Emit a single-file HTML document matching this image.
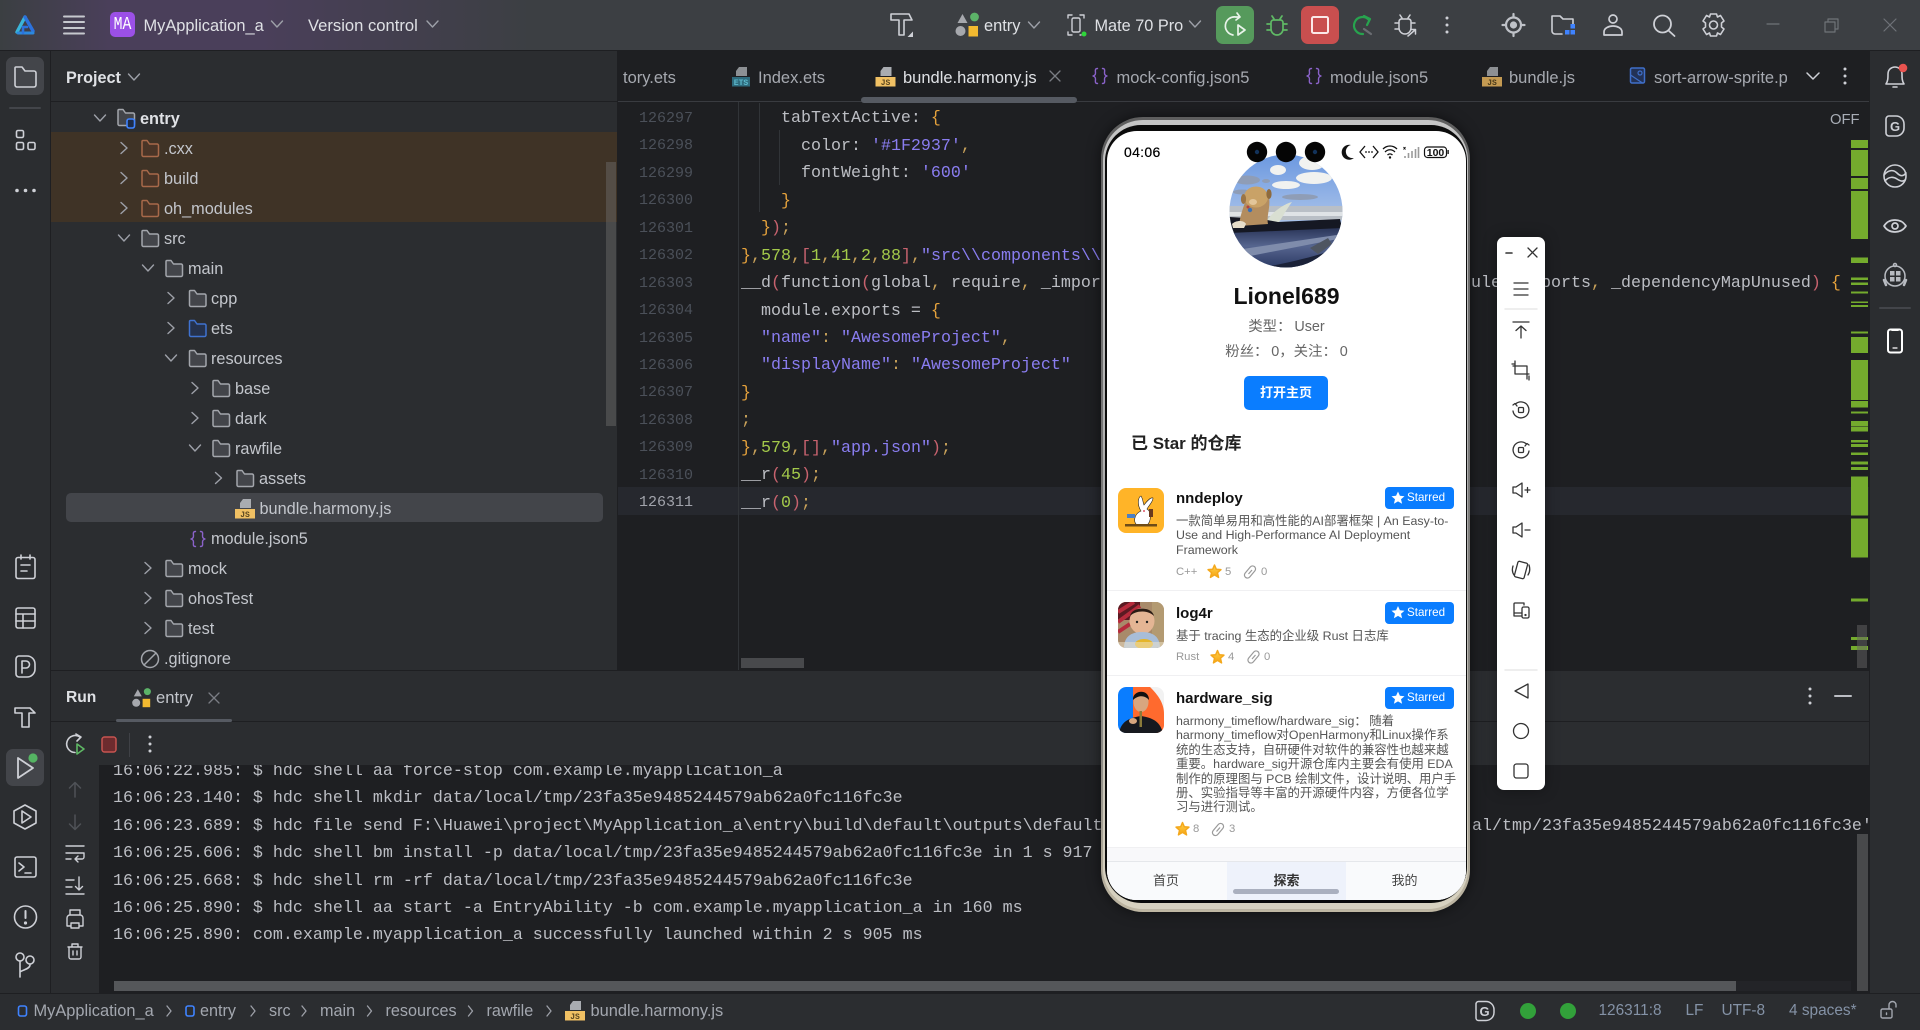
<!DOCTYPE html>
<html><head><meta charset="utf-8"><style>
html,body{margin:0;padding:0;width:1920px;height:1030px;overflow:hidden;background:#1e1f22}
body{position:relative;font-family:"Liberation Sans","Noto Sans CJK SC",sans-serif;color:#bcbec4}
.b{position:absolute}
.t{position:absolute;height:20px;line-height:20px;margin-top:-10px;white-space:nowrap}
.u{font-size:16.3px;color:#c3c6cc}
.tab{font-size:16.5px;color:#a6a9b0;margin-top:-9px}
.m{font-family:"Liberation Mono",monospace;font-size:16.67px;color:#bcbec4;white-space:pre;margin-top:-8px}
.ln{font-family:"Liberation Mono",monospace;font-size:15px;color:#4b5059;width:60px;left:633px;text-align:right;margin-top:-8.5px}
.st{font-size:16.2px;color:#a3a7af}
.str{font-size:15.4px;color:#8492a6}
.s{color:#8a7df0}.n{color:#a3c94a}.o{color:#e6a23c}.p{color:#c7626e}.c{color:#c9a25a}
svg.l{position:absolute;left:0;top:0;overflow:visible}
.ph{font-size:12.4px;color:#555;line-height:14.4px;position:absolute;left:1176px;white-space:nowrap}
.nm{font-size:15px;font-weight:bold;color:#111;margin-top:-9px}
.mt{font-size:11.3px;color:#999}
.badge{position:absolute;left:1385px;width:69px;height:22px;background:#0a7dff;border-radius:4px;color:#fff;font-size:11.6px;line-height:22px;text-indent:22px}
.sep{position:absolute;left:1107px;width:359px;height:1px;background:#f0f0f2}
</style></head><body>

<!-- backgrounds -->
<div class="b" style="left:0;top:0;width:1920px;height:50px;background:linear-gradient(90deg,#3b3f42 0,#4a3f5a 110px,#4a3f5a 260px,#3c3f43 530px)"></div>
<div class="b" style="left:0;top:50px;width:1920px;height:1px;background:#1e1f22"></div>
<div class="b" style="left:0;top:51px;width:50px;height:942px;background:#2b2d30"></div>
<div class="b" style="left:50px;top:51px;width:1px;height:942px;background:#1e1f22"></div>
<div class="b" style="left:51px;top:51px;width:566px;height:619px;background:#2b2d30"></div>
<div class="b" style="left:51px;top:101px;width:566px;height:1px;background:#1e1f22"></div>
<div class="b" style="left:51px;top:132px;width:566px;height:90px;background:#3f3326"></div>
<div class="b" style="left:66px;top:493px;width:537px;height:29px;border-radius:5px;background:#43454a"></div>
<div class="b" style="left:606px;top:162px;width:10px;height:264px;background:rgba(115,115,115,.42)"></div>
<div class="b" style="left:617px;top:51px;width:1px;height:619px;background:#1e1f22"></div>
<div class="b" style="left:618px;top:101px;width:1252px;height:1px;background:#393b40"></div>
<div class="b" style="left:861px;top:97px;width:216px;height:6px;border-radius:3px;background:#565a62"></div>
<div class="b" style="left:618px;top:487px;width:1252px;height:28px;background:#26282e"></div>
<div class="b" style="left:738px;top:102px;width:1px;height:568px;background:#313438"></div>
<div class="b" style="left:759px;top:103px;width:1px;height:109px;background:#313438"></div>
<div class="b" style="left:779px;top:130px;width:1px;height:55px;background:#313438"></div>
<div class="b" style="left:741px;top:658px;width:63px;height:10px;background:#48494c"></div>
<div class="b" style="left:1870px;top:51px;width:50px;height:942px;background:#2b2d30"></div>
<div class="b" style="left:1869px;top:51px;width:1px;height:942px;background:#1e1f22"></div>
<div class="b" style="left:51px;top:670px;width:1818px;height:95px;background:#2b2d30"></div>
<div class="b" style="left:51px;top:670px;width:1818px;height:1px;background:#1e1f22"></div>
<div class="b" style="left:51px;top:721px;width:1818px;height:1px;background:#1e1f22"></div>
<div class="b" style="left:116px;top:719px;width:116px;height:3px;background:#565a62;border-radius:2px"></div>
<div class="b" style="left:51px;top:765px;width:48px;height:228px;background:#2b2d30"></div>
<div class="b" style="left:114px;top:981px;width:1622px;height:10px;background:#55575a"></div>
<div class="b" style="left:1736px;top:981px;width:115px;height:10px;background:#232428"></div>
<div class="b" style="left:1857px;top:834px;width:11px;height:157px;background:#48494b"></div>
<div class="b" style="left:0;top:993px;width:1920px;height:37px;background:#2b2d30;border-top:1px solid #1e1f22;box-sizing:border-box"></div>
<div class="b" style="left:129px;top:733px;width:1px;height:24px;background:#3f4146"></div>

<!-- top bar text -->
<div class="b" style="left:110px;top:12px;width:25px;height:25px;border-radius:5px;background:#9b50e6"></div>
<div class="b" style="left:110px;top:13px;width:25px;height:25px;color:#fff;font:18px/25px 'Liberation Mono',monospace;text-align:center;transform:scaleX(.82)">MA</div>
<div class="t" style="left:143.5px;top:26px;font-size:16.4px;color:#dfe1e5">MyApplication_a</div>
<div class="t" style="left:308px;top:26px;font-size:16.6px;color:#dfe1e5">Version control</div>
<div class="t" style="left:984px;top:26px;font-size:16.4px;color:#dfe1e5">entry</div>
<div class="t" style="left:1094.5px;top:26px;font-size:16.3px;color:#dfe1e5">Mate 70 Pro</div>
<div class="b" style="left:1216px;top:6px;width:38px;height:38px;border-radius:7px;background:#569a5c"></div>
<div class="b" style="left:1301px;top:6px;width:38px;height:38px;border-radius:7px;background:#c94f4f"></div>

<!-- project -->
<div class="t" style="left:66px;top:78px;font-size:16.2px;font-weight:bold;color:#dfe1e5">Project</div>
<div class="t u" style="left:140px;top:119px;font-weight:bold;color:#dfe1e5">entry</div>
<div class="t u" style="left:164px;top:149px">.cxx</div>
<div class="t u" style="left:164px;top:179px">build</div>
<div class="t u" style="left:164px;top:209px">oh_modules</div>
<div class="t u" style="left:164px;top:239px">src</div>
<div class="t u" style="left:188px;top:269px">main</div>
<div class="t u" style="left:211px;top:299px">cpp</div>
<div class="t u" style="left:211px;top:329px">ets</div>
<div class="t u" style="left:211px;top:359px">resources</div>
<div class="t u" style="left:235px;top:389px">base</div>
<div class="t u" style="left:235px;top:419px">dark</div>
<div class="t u" style="left:235px;top:449px">rawfile</div>
<div class="t u" style="left:259px;top:479px">assets</div>
<div class="t u" style="left:259.5px;top:509px">bundle.harmony.js</div>
<div class="t u" style="left:211px;top:539px">module.json5</div>
<div class="t u" style="left:188px;top:569px">mock</div>
<div class="t u" style="left:188px;top:599px">ohosTest</div>
<div class="t u" style="left:188px;top:629px">test</div>
<div class="t u" style="left:164px;top:659px">.gitignore</div>

<!-- tabs -->
<div class="t tab" style="left:623px;top:77px">tory.ets</div>
<div class="t tab" style="left:758px;top:77px">Index.ets</div>
<div class="t tab" style="left:903px;top:77px;color:#dfe1e5">bundle.harmony.js</div>
<div class="t tab" style="left:1116.5px;top:77px">mock-config.json5</div>
<div class="t tab" style="left:1330px;top:77px">module.json5</div>
<div class="t tab" style="left:1509px;top:77px">bundle.js</div>
<div class="t tab" style="left:1654px;top:77px;width:133px;overflow:hidden">sort-arrow-sprite.png</div>
<div class="t" style="left:1830px;top:120px;font-size:14.8px;color:#a8adb6">OFF</div>

<!-- line numbers -->
<div class="t ln" style="top:117.3px">126297</div>
<div class="t ln" style="top:144.8px">126298</div>
<div class="t ln" style="top:172.2px">126299</div>
<div class="t ln" style="top:199.6px">126300</div>
<div class="t ln" style="top:227.1px">126301</div>
<div class="t ln" style="top:254.5px">126302</div>
<div class="t ln" style="top:282px">126303</div>
<div class="t ln" style="top:309.5px">126304</div>
<div class="t ln" style="top:337px">126305</div>
<div class="t ln" style="top:364.4px">126306</div>
<div class="t ln" style="top:391.8px">126307</div>
<div class="t ln" style="top:419.3px">126308</div>
<div class="t ln" style="top:446.7px">126309</div>
<div class="t ln" style="top:474.2px">126310</div>
<div class="t ln" style="top:501.7px;color:#a1a3ab">126311</div>

<!-- code -->
<div class="t m" style="left:741px;top:117.3px">    tabTextActive: <span class="o">{</span></div>
<div class="t m" style="left:741px;top:144.8px">      color: <span class="s">'#1F2937'</span><span class="c">,</span></div>
<div class="t m" style="left:741px;top:172.2px">      fontWeight: <span class="s">'600'</span></div>
<div class="t m" style="left:741px;top:199.6px">    <span class="o">}</span></div>
<div class="t m" style="left:741px;top:227.1px">  <span class="o">}</span><span class="p">)</span><span class="c">;</span></div>
<div class="t m" style="left:741px;top:254.5px"><span class="o">}</span><span class="c">,</span><span class="n">578</span><span class="c">,</span><span class="p">[</span><span class="n">1</span><span class="c">,</span><span class="n">41</span><span class="c">,</span><span class="n">2</span><span class="c">,</span><span class="n">88</span><span class="p">]</span><span class="c">,</span><span class="s">"src\\components\\</span></div>
<div class="t m" style="left:741px;top:282px">__d<span class="p">(</span>function<span class="p">(</span>global<span class="c">,</span> require<span class="c">,</span> _impor</div>
<div class="t m" style="left:1471px;top:282px">ule<span class="c">,</span> exports<span class="c">,</span> _dependencyMapUnused<span class="p">)</span> <span class="o">{</span></div>
<div class="t m" style="left:741px;top:309.5px">  module.exports = <span class="o">{</span></div>
<div class="t m" style="left:741px;top:337px">  <span class="s">"name"</span><span class="c">:</span> <span class="s">"AwesomeProject"</span><span class="c">,</span></div>
<div class="t m" style="left:741px;top:364.4px">  <span class="s">"displayName"</span><span class="c">:</span> <span class="s">"AwesomeProject"</span></div>
<div class="t m" style="left:741px;top:391.8px"><span class="o">}</span></div>
<div class="t m" style="left:741px;top:419.3px"><span class="c">;</span></div>
<div class="t m" style="left:741px;top:446.7px"><span class="o">}</span><span class="c">,</span><span class="n">579</span><span class="c">,</span><span class="p">[]</span><span class="c">,</span><span class="s">"app.json"</span><span class="p">)</span><span class="c">;</span></div>
<div class="t m" style="left:741px;top:474.2px">__r<span class="p">(</span><span class="n">45</span><span class="p">)</span><span class="c">;</span></div>
<div class="t m" style="left:741px;top:501.7px">__r<span class="p">(</span><span class="n">0</span><span class="p">)</span><span class="c">;</span></div>

<!-- run panel -->
<div class="t" style="left:66px;top:698px;font-size:15.6px;font-weight:bold;color:#dfe1e5">Run</div>
<div class="t" style="left:156px;top:698px;font-size:16.6px;color:#c3c6cc">entry</div>
<div class="b" style="left:99px;top:765px;width:1771px;height:215px;overflow:hidden">
<div class="t m" style="left:14px;top:5px">16:06:22.985: $ hdc shell aa force-stop com.example.myapplication_a</div>
<div class="t m" style="left:14px;top:32.4px">16:06:23.140: $ hdc shell mkdir data/local/tmp/23fa35e9485244579ab62a0fc116fc3e</div>
<div class="t m" style="left:14px;top:59.8px">16:06:23.689: $ hdc file send F:\Huawei\project\MyApplication_a\entry\build\default\outputs\default</div>
<div class="t m" style="left:1373px;top:59.8px">al/tmp/23fa35e9485244579ab62a0fc116fc3e'</div>
<div class="t m" style="left:14px;top:87.2px">16:06:25.606: $ hdc shell bm install -p data/local/tmp/23fa35e9485244579ab62a0fc116fc3e in 1 s 917 ms</div>
<div class="t m" style="left:14px;top:114.6px">16:06:25.668: $ hdc shell rm -rf data/local/tmp/23fa35e9485244579ab62a0fc116fc3e</div>
<div class="t m" style="left:14px;top:142px">16:06:25.890: $ hdc shell aa start -a EntryAbility -b com.example.myapplication_a in 160 ms</div>
<div class="t m" style="left:14px;top:169.4px">16:06:25.890: com.example.myapplication_a successfully launched within 2 s 905 ms</div>
</div>

<!-- status bar -->
<div class="t st" style="left:33.5px;top:1011px;font-size:16.4px">MyApplication_a</div>
<div class="t st" style="left:200px;top:1011px">entry</div>
<div class="t st" style="left:269px;top:1011px">src</div>
<div class="t st" style="left:320px;top:1011px">main</div>
<div class="t st" style="left:385.5px;top:1011px">resources</div>
<div class="t st" style="left:486.5px;top:1011px">rawfile</div>
<div class="t st" style="left:590.5px;top:1011px;font-size:16.4px">bundle.harmony.js</div>
<div class="t str" style="left:1598.5px;top:1011px">126311:8</div>
<div class="t str" style="left:1685.5px;top:1011px">LF</div>
<div class="t str" style="left:1721.5px;top:1011px">UTF-8</div>
<div class="t str" style="left:1789px;top:1011px">4 spaces*</div>
<div class="b" style="left:1520px;top:1003px;width:16px;height:16px;border-radius:50%;background:#32a13a"></div>
<div class="b" style="left:1560px;top:1003px;width:16px;height:16px;border-radius:50%;background:#32a13a"></div>

<!-- icons under phone -->
<svg class="l" width="1920" height="1030" viewBox="0 0 1920 1030" fill="none" stroke-linecap="round" stroke-linejoin="round">
<defs>
<g id="cr"><path d="M-3 -5.5L3 0L-3 5.5" stroke="#9da0a8" stroke-width="1.4"/></g>
<g id="cd"><path d="M-5.5 -3L0 3L5.5 -3" stroke="#9da0a8" stroke-width="1.4"/></g>
<path id="fp" d="M-8 -7.5A1 1 0 0 1 -7 -8.5H-3L-0.5 -5H7A1.5 1.5 0 0 1 8.5 -3.5V6A1.5 1.5 0 0 1 7 7.5H-6.5A1.5 1.5 0 0 1 -8 6Z"/>
<g id="fg"><use href="#fp" fill="#43454a" stroke="#a3a6ac" stroke-width="1.5"/></g>
<g id="fo"><use href="#fp" fill="#4a3527" stroke="#a8694a" stroke-width="1.5"/></g>
<g id="fb"><use href="#fp" fill="#25324d" stroke="#3f72d0" stroke-width="1.5"/></g>
<g id="js"><path d="M-2 -10H6V-1H-5V-6Z" fill="#a9acb1"/><rect x="-10" y="0" width="20" height="9.5" fill="#f0c063"/><text x="0" y="8" font-family="Liberation Mono" font-size="8" font-weight="bold" fill="#5b4720" text-anchor="middle">JS</text></g>
<g id="jd"><path d="M-2 -10H6V-1H-5V-6Z" fill="#8d9094"/><rect x="-10" y="0" width="20" height="9.5" fill="#c49a52"/><text x="0" y="8" font-family="Liberation Mono" font-size="8" font-weight="bold" fill="#4a3a1a" text-anchor="middle">JS</text></g>
<g id="br"><path d="M-2.5 -7.5C-5.5 -7.5 -4.5 -5 -4.5 -3C-4.5 -1.2 -5.5 -0.4 -7 0C-5.5 0.4 -4.5 1.2 -4.5 3C-4.5 5 -5.5 7.5 -2.5 7.5M2.5 -7.5C5.5 -7.5 4.5 -5 4.5 -3C4.5 -1.2 5.5 -0.4 7 0C5.5 0.4 4.5 1.2 4.5 3C4.5 5 5.5 7.5 2.5 7.5" stroke="#8a62c9" stroke-width="1.4"/></g>
<g id="en"><path d="M-4 -11L1 -2H-9Z" fill="#a6a8ad"/><circle cx="8" cy="-8" r="4.4" fill="#5cb368"/><circle cx="-6" cy="6" r="5" fill="#a6a8ad"/><rect x="2" y="1" width="9.5" height="10.5" fill="#f2b930"/></g>
<g id="x"><path d="M-5 -5L5 5M5 -5L-5 5" stroke="#7a7d84" stroke-width="1.3"/></g>
<g id="dots"><circle cy="-7" r="1.5" fill="#ced0d6"/><circle r="1.5" fill="#ced0d6"/><circle cy="7" r="1.5" fill="#ced0d6"/></g>
</defs>

<!-- top bar -->
<g transform="translate(25,25)"><path d="M0 -8L-8 7" stroke="#3ab5d9" stroke-width="3.4"/><path d="M0 -8L8 6" stroke="#2c72dd" stroke-width="3.4"/><path d="M-7 8H8" stroke="#2c88dd" stroke-width="3"/><path d="M-2 8V2H2" stroke="#2c72dd" stroke-width="2.6"/></g>
<path d="M64 16.5H84M64 22H84M64 28H84M64 33.5H84" stroke="#c6c8ce" stroke-width="2"/>
<use href="#cd" x="277" y="24"/><use href="#cd" x="432.5" y="24"/><use href="#cd" x="1034" y="25"/><use href="#cd" x="1195" y="24"/>
<g transform="translate(901,25)" stroke="#ced0d6" stroke-width="1.6"><path d="M-10 -11H8L11 -5H3V10H-2V-5H-10Z"/><path d="M12 12H6.5L12 6.5Z" fill="#ced0d6" stroke="none"/></g>
<use href="#en" x="966.5" y="25"/>
<g transform="translate(1076,25)" stroke="#ced0d6" stroke-width="1.4"><path d="M-8 -7V-10H-4M4 -10H8V-7M-8 7V10H-4M4 10H5"/><rect x="-4" y="-7" width="8" height="14" rx="1.5"/><circle cx="8" cy="9" r="2.5" fill="#2fd63a" stroke="none"/></g>
<g transform="translate(1235,25)" stroke="#e8f3e9" stroke-width="1.7"><path d="M-2 10A8.5 8.5 0 0 1 1 -8L5 -8M2 -12L5 -8L1 -5"/><path d="M3 0L10 5L3 10Z"/></g>
<g transform="translate(1277,25)" stroke="#5fb865" stroke-width="1.7"><path d="M-4 -5H4A3 3 0 0 1 6 -2V4A6 6 0 0 1 -6 4V-2A3 3 0 0 1 -4 -5ZM-6 -1H-10M6 -1H10M-6 5H-10M6 5H10M-3 -6L-5 -9M3 -6L5 -9"/></g>
<rect x="1312" y="17" width="16" height="16" rx="1.5" stroke="#fbe9e9" stroke-width="2"/>
<g transform="translate(1362,25)"><path d="M7 -5A8.5 8.5 0 1 0 1 9" stroke="#27a34e" stroke-width="2.2"/><path d="M2 -9L8 -6L5 0" stroke="#27a34e" stroke-width="2.2"/><path d="M2 4L9 9" stroke="#6a6d72" stroke-width="2.2"/></g>
<g transform="translate(1405,25)" stroke="#ced0d6" stroke-width="1.5"><path d="M-4 -6H4A3 3 0 0 1 6 -3V3A6 6 0 0 1 -6 3V-3A3 3 0 0 1 -4 -6ZM-6 -2H-10M6 -2H10M-6 4H-10M-3 -7L-5 -10M3 -7L5 -10"/><path d="M3 11L10 5M6 4.5H10.5V9"/></g>
<use href="#dots" x="1447" y="25"/>
<g transform="translate(1513.5,25)" stroke="#bfc2c8" stroke-width="2.2"><circle r="7.5"/><circle r="2.5" fill="#bfc2c8"/><path d="M0 -11V-8M0 8V11M-11 0H-8M8 0H11"/></g>
<g transform="translate(1563,25)"><path d="M-11 -9H-3L0 -6H10V-1M-1 9H-8A3 3 0 0 1 -11 6V-9" stroke="#ced0d6" stroke-width="1.6"/><rect x="2" y="5" width="4.5" height="4.5" fill="#3f83ff"/><rect x="7.5" y="5" width="4.5" height="4.5" fill="#3f83ff"/><rect x="7.5" y="-1" width="4.5" height="4.5" fill="#3f83ff"/></g>
<g transform="translate(1613,25)" stroke="#ced0d6" stroke-width="1.7"><circle cy="-6" r="4"/><path d="M-9 10V7C-9 3 -4 1 0 1C4 1 9 3 9 7V10Z"/></g>
<g transform="translate(1663.5,25)" stroke="#ced0d6" stroke-width="1.8"><circle cx="-1" cy="-1" r="8.5"/><path d="M5 5.5L11 11"/></g>
<g transform="translate(1713.5,25)" stroke="#ced0d6" stroke-width="1.6"><path d="M-3 -11H3L4 -8L7 -9.5L10.5 -4L8 -2V2L10.5 4L7 9.5L4 8L3 11H-3L-4 8L-7 9.5L-10.5 4L-8 2V-2L-10.5 -4L-7 -9.5L-4 -8Z"/><circle r="4"/></g>
<path d="M1767 24H1779" stroke="#6f7378" stroke-width="1.2"/>
<path d="M1828 22V19H1838V29H1835" stroke="#6f7378" stroke-width="1.2"/><rect x="1825" y="22" width="10" height="10" stroke="#6f7378" stroke-width="1.2"/>
<path d="M1884 19L1896 31M1896 19L1884 31" stroke="#6f7378" stroke-width="1.2"/>

<!-- left rail -->
<rect x="6" y="57" width="38" height="38" rx="7" fill="#43454a"/>
<g transform="translate(25,77)" stroke="#ced0d6" stroke-width="1.6"><path d="M-10 -9A1 1 0 0 1 -9 -10H-3L0 -6H9A2 2 0 0 1 11 -4V8A2 2 0 0 1 9 10H-8A2 2 0 0 1 -10 8Z"/></g>
<path d="M10 108H40" stroke="#43454a" stroke-width="2"/>
<g stroke="#ced0d6" stroke-width="1.6"><rect x="16.5" y="130.5" width="7" height="7" rx="1.5"/><rect x="16.5" y="142.5" width="7" height="7" rx="1.5"/><rect x="28" y="142.5" width="7" height="7" rx="1.5"/></g>
<g fill="#ced0d6"><circle cx="17" cy="190.5" r="1.8"/><circle cx="25.5" cy="190.5" r="1.8"/><circle cx="34" cy="190.5" r="1.8"/></g>
<g stroke="#ced0d6" stroke-width="1.6"><rect x="16" y="557.5" width="19" height="21" rx="2"/><path d="M21 555V559M30 555V559M21 565H30M21 571H27"/>
<rect x="16" y="608" width="19" height="20" rx="2"/><path d="M16 614H35M23 614V628M16 621H35"/>
<path d="M16 659A3 3 0 0 1 19 656H27A8 8 0 0 1 35 664V669A8 8 0 0 1 27 677H19A3 3 0 0 1 16 674Z"/><path d="M22 673V661H26A3.5 3.5 0 0 1 26 668H22"/>
<path d="M15 708H30L35 713H29V727H22V713H15Z"/>
<path d="M25 805L36 811V823L25 829L14 823V811Z"/><path d="M22 811V823L31 817Z"/>
<rect x="15" y="857" width="21" height="20" rx="2"/><path d="M19 863L24 867L19 871M25 873H31"/>
<circle cx="25.5" cy="917" r="11"/><path d="M25.5 911V918" stroke-width="2"/><circle cx="25.5" cy="923" r="0.8"/>
<circle cx="20" cy="957" r="4"/><circle cx="30" cy="960" r="4"/><path d="M20 961V977M30 964V965C30 969 22 970 20 972"/></g>
<rect x="6" y="749" width="38" height="37" rx="7" fill="#43454a"/>
<g stroke="#ced0d6" stroke-width="1.8"><path d="M18 758V778L33 768Z"/></g>
<circle cx="33" cy="758" r="4.6" fill="#55b463"/>

<!-- tree icons -->
<use href="#cd" x="100" y="118"/>
<g transform="translate(126,118)"><use href="#fp" fill="#43454a" stroke="#a3a6ac" stroke-width="1.5"/><rect x="1" y="1" width="7.5" height="9" rx="2" stroke="#3f83ff" stroke-width="1.6" fill="#1d2b47"/></g>
<use href="#cr" x="124" y="148"/><use href="#fo" x="150" y="149"/>
<use href="#cr" x="124" y="178"/><use href="#fo" x="150" y="179"/>
<use href="#cr" x="124" y="208"/><use href="#fo" x="150" y="209"/>
<use href="#cd" x="124" y="238"/><use href="#fg" x="150" y="239"/>
<use href="#cd" x="148" y="268"/><use href="#fg" x="174" y="269"/>
<use href="#cr" x="171" y="298"/><use href="#fg" x="197.5" y="299"/>
<use href="#cr" x="171" y="328"/><use href="#fb" x="197.5" y="329"/>
<use href="#cd" x="171" y="358"/><use href="#fg" x="197.5" y="359"/>
<use href="#cr" x="195" y="388"/><use href="#fg" x="221" y="389"/>
<use href="#cr" x="195" y="418"/><use href="#fg" x="221" y="419"/>
<use href="#cd" x="195" y="448"/><use href="#fg" x="221" y="449"/>
<use href="#cr" x="218.5" y="478"/><use href="#fg" x="245" y="479"/>
<use href="#js" x="245" y="509"/>
<use href="#br" x="198" y="539"/>
<use href="#cr" x="148" y="568"/><use href="#fg" x="174" y="569"/>
<use href="#cr" x="148" y="598"/><use href="#fg" x="174" y="599"/>
<use href="#cr" x="148" y="628"/><use href="#fg" x="174" y="629"/>
<g transform="translate(150,659)" stroke="#a3a6ac" stroke-width="1.5"><circle r="8.5"/><path d="M-6 6L6 -6"/></g>
<use href="#cd" x="134" y="77"/>

<!-- tab icons -->
<g transform="translate(741,77)"><path d="M-2 -10H6V-1H-5V-6Z" fill="#8d9094"/><rect x="-9" y="0" width="18" height="9.5" fill="#2f6b7d"/><text x="0" y="8" font-family="Liberation Mono" font-size="8" font-weight="bold" fill="#5cb8cc" text-anchor="middle">ETS</text></g>
<use href="#js" x="885.5" y="77"/><use href="#x" x="1055" y="76"/>
<use href="#br" x="1100" y="76"/><use href="#br" x="1314" y="76"/>
<use href="#jd" x="1492" y="77"/>
<g transform="translate(1637.5,76)"><rect x="-7" y="-8" width="14" height="15" rx="1.5" stroke="#3f6fc9" stroke-width="1.5" fill="#233256"/><circle cx="2.5" cy="-3" r="2" stroke="#3f6fc9" stroke-width="1.2"/><path d="M-7 -1L5 7" stroke="#3f6fc9" stroke-width="1.2"/></g>
<path d="M1807 73L1813 79L1819 73" stroke="#ced0d6" stroke-width="1.5"/>
<use href="#dots" x="1845" y="76"/>

<!-- right rail -->
<g transform="translate(1895,76)" stroke="#ced0d6" stroke-width="1.6"><path d="M-9 8C-7 5 -7 2 -7 -2C-7 -7 -3 -9 0 -9C3 -9 7 -7 7 -2C7 2 7 5 9 8Z"/><path d="M-2 11H2"/><circle cx="8" cy="-8" r="4.3" fill="#e9534f" stroke="none"/></g>
<g transform="translate(1895,126)" stroke="#ced0d6" stroke-width="1.6"><path d="M-9 -7A3 3 0 0 1 -6 -10H1A8 8 0 0 1 9 -2V2A8 8 0 0 1 1 10H-6A3 3 0 0 1 -9 7Z"/><text x="0" y="5" font-size="13" font-weight="bold" fill="#ced0d6" stroke="none" text-anchor="middle">G</text></g>
<g transform="translate(1895,176)" stroke="#ced0d6" stroke-width="1.6"><circle r="11"/><path d="M-11 -1C-6 -7 -1 -6 2 -3C5 0 8 1 11 -3M-10 5C-6 0 -1 1 2 3C5 5 8 6 10 4"/></g>
<g transform="translate(1895,226)" stroke="#ced0d6" stroke-width="1.7"><path d="M-11 0C-6 -8 6 -8 11 0C6 8 -6 8 -11 0Z"/><circle r="3"/></g>
<g transform="translate(1895,276)" stroke="#b8bbc1" stroke-width="1.5"><circle r="10"/><path d="M-11 4L-9 9M11 4L9 9" stroke-width="2.5"/><circle cy="-11" r="1.5"/><g fill="#b8bbc1" stroke="none"><rect x="-5" y="-5" width="4.5" height="4.5"/><rect x="1" y="-5" width="4.5" height="4.5"/><rect x="-5" y="1" width="4.5" height="4.5"/><rect x="1" y="1" width="4.5" height="4.5"/></g></g>
<path d="M1880 308H1910" stroke="#43454a" stroke-width="2"/>
<g transform="translate(1895,341)" stroke="#fff" stroke-width="2"><rect x="-7" y="-11.5" width="14" height="23" rx="2.5"/><path d="M-2 7H2" stroke-width="1.2"/><path d="M-3 -11H3" stroke-width="2"/></g>

<!-- run panel icons -->
<g transform="translate(141,698) scale(.8)"><use href="#en"/></g>
<use href="#x" x="214" y="698"/>
<g transform="translate(75,744)"><path d="M5 -7A8.5 8.5 0 1 0 0 8.5" stroke="#ced0d6" stroke-width="1.6"/><path d="M1 -10L6 -7L2 -3" stroke="#ced0d6" stroke-width="1.6"/><path d="M2 0L9 5L2 10Z" stroke="#5fb865" stroke-width="1.6"/></g>
<rect x="102" y="737" width="14" height="15" rx="2.5" fill="#6d2b2e" stroke="#c75450" stroke-width="1.5"/>
<use href="#dots" x="150" y="744"/>
<g stroke="#4f5257" stroke-width="1.5"><path d="M75 797V783M69.5 788L75 782.5L80.5 788"/><path d="M75 815V829M69.5 824L75 829.5L80.5 824"/></g>
<g stroke="#ced0d6" stroke-width="1.4"><path d="M66 846H84M66 853H84V857A2 2 0 0 1 82 859H75M78 856L75 859L78 862M66 859H71"/>
<path d="M66 880H74M66 887H72M66 894H84M79 877V890M75.5 886.5L79 890L82.5 886.5"/>
<path d="M70 915V910H80V915M67 926V918A3 3 0 0 1 70 915H80A3 3 0 0 1 83 918V926H79M71 923H79V928H71ZM71 926H67"/>
<path d="M68 947H82M72 947V944H78V947M69 947V957A2 2 0 0 0 71 959H79A2 2 0 0 0 81 957V947M73 951V955M77 951V955"/></g>
<use href="#dots" x="1810" y="696"/>
<path d="M1835 696H1851" stroke="#bcbec4" stroke-width="2"/>

<!-- status bar icons -->
<rect x="18.5" y="1006" width="8" height="10" rx="2" stroke="#3f83ff" stroke-width="1.6"/>
<rect x="186" y="1006" width="8" height="10" rx="2" stroke="#3f83ff" stroke-width="1.6"/>
<g stroke="#9da0a8" stroke-width="1.3"><path d="M167 1006L171 1011L167 1016M251 1006L255 1011L251 1016M302 1006L306 1011L302 1016M367.5 1006L371.5 1011L367.5 1016M468.5 1006L472.5 1011L468.5 1016M547 1006L551 1011L547 1016"/></g>
<use href="#js" x="575" y="1011"/>
<g transform="translate(1485,1011)" stroke="#ced0d6" stroke-width="1.5"><path d="M-9 -7A2.5 2.5 0 0 1 -6.5 -9.5H1A8 8 0 0 1 9 -1.5V1.5A8 8 0 0 1 1 9.5H-6.5A2.5 2.5 0 0 1 -9 7Z"/><text x="-0.5" y="5" font-size="13" font-weight="bold" fill="#ced0d6" stroke="none" text-anchor="middle">G</text></g>
<g transform="translate(1888,1011)" stroke="#a3a7af" stroke-width="1.4"><rect x="-7" y="-2" width="11" height="9" rx="1.5"/><path d="M1 -2V-6A3.5 3.5 0 0 1 8 -6V-4"/><path d="M-1.5 2V3.5"/></g>

<!-- error stripe markers -->
<g fill="#74ab2d">
<rect x="1851" y="140" width="17" height="8"/><rect x="1851" y="150" width="17" height="26"/><rect x="1851" y="178" width="17" height="11"/><rect x="1851" y="191" width="17" height="48"/>
<rect x="1851" y="257.5" width="17" height="5.5"/><rect x="1851" y="277.5" width="17" height="2.5"/><rect x="1851" y="282.5" width="17" height="2.5"/><rect x="1851" y="291.5" width="17" height="2"/><rect x="1851" y="301.5" width="17" height="1.5"/><rect x="1851" y="305" width="17" height="2"/>
<rect x="1851" y="331.5" width="17" height="2"/><rect x="1851" y="337" width="17" height="16"/><rect x="1851" y="360" width="17" height="40"/><rect x="1851" y="401" width="17" height="6.5"/><rect x="1851" y="411.5" width="17" height="2"/><rect x="1851" y="421" width="17" height="5"/><rect x="1851" y="426.5" width="17" height="5"/><rect x="1851" y="440" width="17" height="2.5"/><rect x="1851" y="444" width="17" height="3"/><rect x="1851" y="452.5" width="17" height="2.5"/><rect x="1851" y="461.5" width="17" height="3"/><rect x="1851" y="467" width="17" height="3"/><rect x="1851" y="476.5" width="17" height="39"/><rect x="1851" y="518.5" width="17" height="39"/><rect x="1851" y="598.5" width="17" height="3"/><rect x="1851" y="637" width="17" height="3"/><rect x="1851" y="646" width="17" height="4"/>
</g>
<rect x="1857" y="625" width="10" height="43" fill="rgba(100,100,100,.5)"/>
</svg>

<!-- phone -->
<div class="b" style="left:1101px;top:117px;width:369px;height:795px;border-radius:42px;background:linear-gradient(#5e5e5e,#777 40%,#8c8a84 80%,#bfb7a3);box-shadow:0 0 14px rgba(0,0,0,.55)"></div>
<div class="b" style="left:1103px;top:120px;width:365px;height:789px;border-radius:40px;background:linear-gradient(#c5c5c5,#aaa 50%,#d8d2c0)"></div>
<div class="b" style="left:1105px;top:125px;width:362px;height:778px;border-radius:36px;background:#0b0b0b"></div>
<div class="b" style="left:1107px;top:131px;width:359px;height:769px;border-radius:30px;background:#fff;overflow:hidden"></div>

<!-- avatar & phone graphics -->
<svg class="l" width="1920" height="1030" viewBox="0 0 1920 1030" fill="none">
<defs>
<clipPath id="av"><circle cx="1286" cy="211" r="56.5"/></clipPath>
<linearGradient id="sky" x1="0" y1="0" x2="0" y2="1"><stop offset="0" stop-color="#6b98e0"/><stop offset="1" stop-color="#d5e0f0"/></linearGradient>
<linearGradient id="hood" x1="0" y1="0" x2="0" y2="1"><stop offset="0" stop-color="#2a3558"/><stop offset=".45" stop-color="#56658f"/><stop offset="1" stop-color="#2c3a64"/></linearGradient>
<linearGradient id="gs" x1="0" y1="0" x2="0" y2="1"><stop offset="0" stop-color="#ffd34d"/><stop offset="1" stop-color="#f6a312"/></linearGradient>
<clipPath id="c1"><rect x="1118" y="488" width="46" height="45" rx="8"/></clipPath>
<clipPath id="c2"><rect x="1118" y="602" width="46" height="46" rx="8"/></clipPath>
<clipPath id="c3"><rect x="1118" y="687" width="46" height="46" rx="8"/></clipPath>
<g id="lnk" stroke="#9a9a9a" stroke-width="1.2"><rect x="-3" y="-7" width="6" height="14" rx="3" transform="rotate(40)"/><path d="M-1.5 2L2 -2"/></g>
</defs>
<g clip-path="url(#av)">
<rect x="1229" y="154" width="114" height="114" fill="url(#sky)"/>
<g fill="#f1f2f0"><ellipse cx="1312" cy="163" rx="13" ry="7"/><ellipse cx="1278" cy="170" rx="8" ry="5"/><ellipse cx="1314" cy="178" rx="18" ry="6"/><ellipse cx="1286" cy="185" rx="14" ry="4"/></g>
<g fill="#8f9db6"><ellipse cx="1247" cy="180" rx="13" ry="4.5"/><ellipse cx="1242" cy="192" rx="9" ry="2.5"/><ellipse cx="1300" cy="197" rx="18" ry="3"/><ellipse cx="1266" cy="181" rx="4" ry="2"/></g>
<rect x="1229" y="206" width="114" height="14" fill="#b9bfc6"/>
<path d="M1229 212H1343V216H1229Z" fill="#dfe3e6"/>
<path d="M1266 222C1272 212 1284 204 1292 202C1286 210 1282 218 1278 224Z" fill="#d9dfd2"/>
<path d="M1229 217L1262 219L1278 222L1340 219L1343 232L1235 237L1229 235Z" fill="#151823"/>
<path d="M1229 233L1343 228V268H1229Z" fill="url(#hood)"/>
<path d="M1236 250L1343 234V238L1250 256Z" fill="#7f8cab"/>
<path d="M1262 268C1290 262 1320 256 1343 246V268Z" fill="#1b2238"/>
<path d="M1310 248L1328 238L1332 244L1318 254Z" fill="#4e5561"/>
<path d="M1239 226C1240 216 1243 208 1246 200L1268 194C1272 204 1266 216 1268 224Z" fill="#b38d5f"/>
<ellipse cx="1256" cy="197" rx="12" ry="10.5" fill="#c9a267"/><ellipse cx="1269" cy="194" rx="2.6" ry="5" fill="#8d6a3e"/><ellipse cx="1243.5" cy="199" rx="2.6" ry="5" fill="#9a7546"/>
<ellipse cx="1253" cy="202" rx="4" ry="3" fill="#e2c69a"/><circle cx="1250" cy="210" r="2.2" fill="#3a6fb4"/><circle cx="1248" cy="207" r="1.5" fill="#b5433e"/>
<path d="M1232 224C1236 220 1244 220 1246 224L1244 228H1233Z" fill="#e6ddca"/>
</g>
<g fill="#050505"><circle cx="1257" cy="152" r="10.2"/><circle cx="1286" cy="152" r="10.2"/><circle cx="1315" cy="152" r="10.2"/></g>
<circle cx="1257" cy="152" r="2.2" fill="#12325a"/><circle cx="1315" cy="152" r="2.2" fill="#12325a"/>
<!-- status icons -->
<path d="M1351 145A7.5 7.5 0 1 0 1354 158A6.5 6.5 0 0 1 1351 145Z" fill="#111"/>
<path d="M1365 146L1360 152L1365 158M1373 146L1378 152L1373 158" stroke="#111" stroke-width="1.3"/><circle cx="1366" cy="152" r="0.9" fill="#111"/><circle cx="1369" cy="152" r="0.9" fill="#111"/><circle cx="1372" cy="152" r="0.9" fill="#111"/>
<path d="M1383 149C1387 145 1393 145 1397 149M1385 152C1388 149 1392 149 1395 152M1387.5 155C1389 153.5 1391 153.5 1392.5 155" stroke="#111" stroke-width="1.3"/><circle cx="1390" cy="157.5" r="1.2" fill="#111"/>
<path d="M1405 158V156M1408.5 158V153M1412 158V151M1415.5 158V149M1418.5 158V147" stroke="#9a9a9a" stroke-width="1.6"/><path d="M1403.5 147L1405.5 149.5M1405.5 147L1403.5 149.5" stroke="#111" stroke-width="1"/>
<rect x="1424.5" y="147" width="22" height="10.5" rx="3" stroke="#111" stroke-width="1.2"/><rect x="1447.5" y="150" width="1.3" height="4" fill="#111"/>
<text x="1435.5" y="156.2" font-family="Liberation Sans" font-size="10.5" font-weight="bold" fill="#111" text-anchor="middle">100</text>

<!-- nndeploy avatar -->
<g clip-path="url(#c1)"><rect x="1118" y="488" width="46" height="45" fill="#ffb428"/>
<path d="M1141 511C1137 505 1138 497 1141 496C1143 499 1143 503 1144 505C1147 501 1151 497 1153 498C1153 502 1149 505 1147 509C1152 512 1151 522 1147 525H1137C1133 522 1134 514 1141 511Z" fill="#fff" stroke="#222" stroke-width=".6"/>
<circle cx="1144" cy="511" r="1" fill="#e0566a"/><rect x="1127" y="514" width="8" height="4" fill="#4a7fc4"/><rect x="1149" y="509" width="4" height="8" fill="#6a3a1e"/>
<rect x="1125" y="524" width="32" height="2.5" fill="#6e4c18"/></g>
<!-- log4r avatar -->
<g clip-path="url(#c2)"><rect x="1118" y="602" width="46" height="46" fill="#a88a6a"/>
<path d="M1118 602H1140V620H1118Z" fill="#5a1a22"/><path d="M1118 612L1134 602M1118 622L1140 606M1118 632L1130 624" stroke="#b62b3c" stroke-width="4"/>
<path d="M1152 602H1164V648H1152Z" fill="#b39a72"/>
<ellipse cx="1142" cy="621" rx="12.5" ry="13" fill="#e4b594"/><path d="M1130 616C1132 606 1152 606 1154 616C1148 610 1136 610 1130 616Z" fill="#2a1c14"/>
<circle cx="1137" cy="622" r="1.2" fill="#222"/><circle cx="1147" cy="622" r="1.2" fill="#222"/>
<path d="M1124 648C1124 636 1132 632 1142 632C1152 632 1160 636 1160 648Z" fill="#a8bdd8"/><ellipse cx="1144" cy="644" rx="9" ry="5" fill="#e5b52a"/><rect x="1118" y="642" width="46" height="6" fill="#efe5cc" opacity=".5"/></g>
<!-- hardware_sig avatar -->
<g clip-path="url(#c3)"><rect x="1118" y="687" width="46" height="46" fill="#f2f2f2"/>
<path d="M1118 695A8 8 0 0 1 1126 687H1134V733H1126A8 8 0 0 1 1118 725Z" fill="#0a7dff"/>
<path d="M1133 687H1150C1158 695 1164 703 1164 714V733H1133Z" fill="#ff6a2e"/>
<path d="M1119 733C1121 722 1128 718 1141 716C1154 718 1160 722 1163 733Z" fill="#17191f"/>
<ellipse cx="1141" cy="702" rx="7.5" ry="10" fill="#d8a67f"/><path d="M1133 700C1132 690 1149 688 1149 700C1145 695 1138 695 1133 700Z" fill="#111"/>
<rect x="1139.5" y="711" width="2.5" height="16" fill="#8a7a3a"/><ellipse cx="1133" cy="721" rx="4" ry="3" fill="#d8a67f"/></g>

<g transform="translate(1214.5,571.5) scale(.92)"><path d="M0 -7L2 -2.4L7 -2L3.2 1.3L4.4 6.4L0 3.7L-4.4 6.4L-3.2 1.3L-7 -2L-2 -2.4Z" fill="url(#gs)" stroke="#f4a81c" stroke-width="1.6" stroke-linejoin="round"/></g>
<g transform="translate(1217.5,657) scale(.92)"><path d="M0 -7L2 -2.4L7 -2L3.2 1.3L4.4 6.4L0 3.7L-4.4 6.4L-3.2 1.3L-7 -2L-2 -2.4Z" fill="url(#gs)" stroke="#f4a81c" stroke-width="1.6" stroke-linejoin="round"/></g>
<g transform="translate(1182.5,829) scale(.92)"><path d="M0 -7L2 -2.4L7 -2L3.2 1.3L4.4 6.4L0 3.7L-4.4 6.4L-3.2 1.3L-7 -2L-2 -2.4Z" fill="url(#gs)" stroke="#f4a81c" stroke-width="1.6" stroke-linejoin="round"/></g>
<use href="#lnk" x="1250" y="572"/><use href="#lnk" x="1253.5" y="657"/><use href="#lnk" x="1218" y="829.5"/>
</svg>

<!-- phone text -->
<div class="t" style="left:1124px;top:152px;font-size:14px;color:#000;letter-spacing:.3px;text-shadow:0 0 .4px #000">04:06</div>
<div class="t" style="left:1107px;width:359px;top:296px;text-align:center;font-size:23px;font-weight:bold;color:#111">Lionel689</div>
<div class="t" style="left:1107px;width:359px;top:326.5px;text-align:center;font-size:14.4px;color:#666">类型&#xFF1A;&thinsp;User</div>
<div class="t" style="left:1107px;width:359px;top:352px;text-align:center;font-size:14.4px;color:#666">粉丝&#xFF1A;&thinsp;0&#xFF0C;关注&#xFF1A;&thinsp;0</div>
<div class="b" style="left:1244px;top:376px;width:84px;height:34px;border-radius:5px;background:#0a7dff;color:#fff;font-size:13px;font-weight:bold;line-height:34px;text-align:center">打开主页</div>
<div class="t" style="left:1131px;top:443.5px;font-size:17px;font-weight:bold;color:#222">已 Star 的仓库</div>

<div class="t nm" style="left:1176px;top:498px">nndeploy</div>
<div class="badge" style="top:487px">Starred</div>
<div class="ph" style="top:514px">一款简单易用和高性能的AI部署框架 | An Easy-to-<br>Use and High-Performance AI Deployment<br>Framework</div>
<div class="t mt" style="left:1176px;top:572px">C++</div><div class="t mt" style="left:1225px;top:572px">5</div><div class="t mt" style="left:1261px;top:572px">0</div>
<div class="sep" style="top:590px"></div>

<div class="t nm" style="left:1176px;top:612.5px">log4r</div>
<div class="badge" style="top:602px">Starred</div>
<div class="ph" style="top:628.5px">基于 tracing 生态的企业级 Rust 日志库</div>
<div class="t mt" style="left:1176px;top:657px">Rust</div><div class="t mt" style="left:1228px;top:657px">4</div><div class="t mt" style="left:1264px;top:657px">0</div>
<div class="sep" style="top:675px"></div>

<div class="t nm" style="left:1176px;top:698px">hardware_sig</div>
<div class="badge" style="top:687px">Starred</div>
<div class="ph" style="top:714px">harmony_timeflow/hardware_sig&#xFF1A;&thinsp;随着<br>harmony_timeflow对OpenHarmony和Linux操作系<br>统的生态支持&#xFF0C;自研硬件对软件的兼容性也越来越<br>重要。hardware_sig开源仓库内主要会有使用 EDA<br>制作的原理图与 PCB 绘制文件&#xFF0C;设计说明、用户手<br>册、实验指导等丰富的开源硬件内容&#xFF0C;方便各位学<br>习与进行测试。</div>
<div class="t mt" style="left:1193px;top:829px">8</div><div class="t mt" style="left:1229px;top:829px">3</div>
<div class="sep" style="top:847px"></div>

<div class="b" style="left:1107px;top:848px;width:359px;height:52px;border-radius:0 0 30px 30px;overflow:hidden;background:#f8f8fa">
<div class="b" style="left:0;top:13px;width:359px;height:39px;background:#f9fafc;border-top:1px solid #e5e7eb"></div>
<div class="b" style="left:120px;top:14px;width:119px;height:38px;background:#eef2fb"></div>
<div class="b" style="left:126px;top:41px;width:106px;height:5px;border-radius:3px;background:#aab0bf"></div>
</div>
<div class="t" style="left:1107px;width:118px;top:880.5px;text-align:center;font-size:13px;color:#444">首页</div>
<div class="t" style="left:1227px;width:119px;top:880.5px;text-align:center;font-size:13px;font-weight:bold;color:#333">探索</div>
<div class="t" style="left:1345px;width:119px;top:880.5px;text-align:center;font-size:13px;color:#444">我的</div>

<!-- float toolbar -->
<div class="b" style="left:1497px;top:237px;width:48px;height:553px;border-radius:7px;background:#fff;box-shadow:0 0 14px rgba(0,0,0,.35)"></div>
<svg class="l" width="1920" height="1030" viewBox="0 0 1920 1030" fill="none" stroke="#333" stroke-width="1.3" stroke-linecap="round" stroke-linejoin="round">
<g fill="#fff" stroke="none" transform="translate(1398,498)"><path d="M0 -6.5L1.9 -2.2L6.5 -1.8L3 1.2L4.1 5.8L0 3.4L-4.1 5.8L-3 1.2L-6.5 -1.8L-1.9 -2.2Z"/></g>
<g fill="#fff" stroke="none" transform="translate(1398,612.5)"><path d="M0 -6.5L1.9 -2.2L6.5 -1.8L3 1.2L4.1 5.8L0 3.4L-4.1 5.8L-3 1.2L-6.5 -1.8L-1.9 -2.2Z"/></g>
<g fill="#fff" stroke="none" transform="translate(1398,698)"><path d="M0 -6.5L1.9 -2.2L6.5 -1.8L3 1.2L4.1 5.8L0 3.4L-4.1 5.8L-3 1.2L-6.5 -1.8L-1.9 -2.2Z"/></g>
<path d="M1506 253H1512" stroke-width="1.6"/><path d="M1528 248L1537 257M1537 248L1528 257"/>
<path d="M1514 283H1528M1514 289H1528M1514 295H1528"/>
<path d="M1505 309H1537" stroke="#e4e4e4"/>
<path d="M1513 322H1529M1521 338V326M1516 330.5L1521 326L1526 330.5"/>
<path d="M1515 361V374H1529M1527 379V366H1513M1512 364H1515M1529 376V380"/>
<g transform="translate(1521,410)"><path d="M-5.5 -6A8 8 0 1 1 -8 1M-8 -5L-6 -6.5L-4 -4"/><rect x="-2.5" y="-2.5" width="5" height="5" rx="1"/></g>
<g transform="translate(1521,450)"><path d="M5.5 -6A8 8 0 1 0 8 1M8 -5L6 -6.5L4 -4"/><rect x="-2.5" y="-2.5" width="5" height="5" rx="1"/></g>
<g transform="translate(1519,490)"><path d="M-6 -3H-3L3 -7V7L-3 3H-6Z"/><path d="M6 0H11M8.5 -2.5V2.5"/></g>
<g transform="translate(1519,530)"><path d="M-6 -3H-3L3 -7V7L-3 3H-6Z"/><path d="M6 0H11"/></g>
<g transform="translate(1521,570)"><rect x="-5" y="-8" width="10" height="16" rx="1.5" transform="rotate(15)"/><path d="M-8 -4C-9 -1 -9 2 -7 5M8 -5C9 -2 9 2 7 5"/></g>
<g transform="translate(1521,610)"><path d="M3 -5V-7H-6A1 1 0 0 0 -7 -6V6H1M-7 3H1"/><rect x="1" y="-3" width="7" height="11" rx="1.5"/><circle cx="4.5" cy="5" r=".5"/></g>
<path d="M1505 670H1537" stroke="#e4e4e4"/>
<path d="M1528 684V698L1515 691Z"/>
<circle cx="1521" cy="731" r="7.5"/>
<rect x="1514" y="764" width="14" height="14" rx="2.5"/>
</svg>
</body></html>
